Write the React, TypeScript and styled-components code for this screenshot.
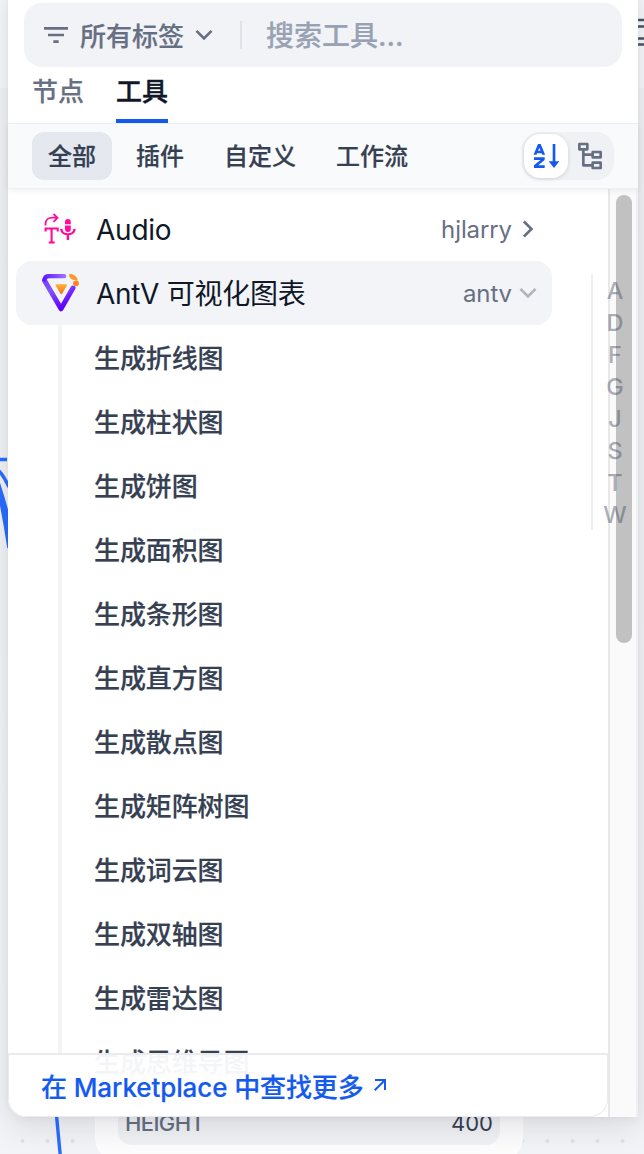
import React from 'react';
import styled, { createGlobalStyle } from 'styled-components';
import {
  RiArrowDownSLine,
  RiArrowRightSLine,
  RiArrowRightUpLine,
  RiFilter3Line,
  RiNodeTree,
  RiSortAlphabetAsc,
} from 'react-icons/ri';

const GlobalStyle = createGlobalStyle`
  * { box-sizing: border-box; }
  body {
    margin: 0;
    background: #f2f4f7;
    font-family: Inter, 'Noto Sans CJK SC', sans-serif;
  }
  svg { flex: none; }
`;

const Page = styled.div`
  position: relative;
  width: 644px;
  height: 1154px;
  overflow: hidden;
  background: linear-gradient(#f5f7f9 88px, #f0f2f5 88px, #f2f4f7 100%);
`;

const Canvas = styled.svg`
  position: absolute;
  inset: 0;
`;

const NodeCard = styled.div`
  position: absolute;
  left: 95px;
  top: 1040px;
  width: 428px;
  height: 122px;
  padding: 40px 22px 0;
  border: 1px solid #fff;
  border-radius: 0 0 24px 24px;
  background: #fdfdfe;
`;

const NodeField = styled.div`
  display: flex;
  justify-content: space-between;
  align-items: center;
  height: 64px;
  padding: 20px 7px 0;
  border-radius: 14px;
  background: #f0f2f5;
  font-size: 22px;
  line-height: 42px;
  font-weight: 500;
  letter-spacing: -0.6px;
  color: #676f83;
`;

const FieldValue = styled.span`
  color: #354052;
  font-size: 22px;
  font-weight: 400;
  letter-spacing: 0;
`;

const Panel = styled.div`
  position: absolute;
  left: 8px;
  top: -20px;
  width: 630px;
  height: 1137px;
  padding-top: 20px;
  display: flex;
  flex-direction: column;
  background: linear-gradient(to right, transparent 628px, #f0f0f2 628px);
  border-radius: 0 0 0 20px;
  box-shadow: 0 12px 32px rgba(16, 24, 40, 0.1), 0 2px 10px rgba(16, 24, 40, 0.05);
`;

const Header = styled.div`
  flex: none;
  height: 124px;
  padding: 3px 16px 0;
  background: #fff;
  border-bottom: 1px solid #eff1f3;
`;

const SearchBar = styled.div`
  display: flex;
  align-items: center;
  height: 64px;
  padding-left: 16px;
  border-radius: 18px;
  background: #f1f3f7;
  color: #676f83;
  font-size: 26px;
  font-weight: 500;
  -webkit-text-stroke: 0.2px currentColor;

  span { position: relative; top: -1px; }
`;

const TagLabel = styled.span`
  margin: 0 4px 0 8px;
`;

const Separator = styled.i`
  width: 2px;
  height: 28px;
  margin: 0 24px 0 20px;
  background: #dfe2e8;
`;

const Placeholder = styled.span`
  font-size: 28px;
  color: #98a2b3;
`;

const Tabs = styled.div`
  display: flex;
  gap: 32px;
  padding-left: 8px;
`;

const Tab = styled.div<{ $active?: boolean }>`
  height: 56px;
  line-height: 50px;
  font-size: 26px;
  font-weight: 500;
  -webkit-text-stroke: ${(p) => (p.$active ? '0.4px' : '0.2px')} currentColor;
  color: ${(p) => (p.$active ? '#101828' : '#676f83')};
  border-bottom: 4px solid ${(p) => (p.$active ? '#155aef' : 'transparent')};
`;

const FilterRow = styled.div`
  flex: none;
  position: relative;
  z-index: 1;
  display: flex;
  align-items: center;
  gap: 8px;
  height: 65px;
  padding: 0 24px;
  background: #f9fafb;
  border-bottom: 1px solid #eef0f2;
  box-shadow: 0 2px 6px rgba(16, 24, 40, 0.06);
`;

const Chip = styled.div<{ $active?: boolean }>`
  height: 48px;
  padding: 0 16px;
  border-radius: 12px;
  line-height: 50px;
  font-size: 24px;
  font-weight: 500;
  -webkit-text-stroke: 0.2px currentColor;
  color: #354052;
  background: ${(p) => (p.$active ? '#e5e8ef' : 'transparent')};
`;

const ViewToggle = styled.div`
  display: flex;
  align-items: center;
  width: 92px;
  height: 48px;
  margin-left: auto;
  padding: 2px;
  border-radius: 18px;
  background: #f0f1f5;
`;

const ViewButton = styled.div<{ $active?: boolean }>`
  display: flex;
  align-items: center;
  justify-content: center;
  width: 44px;
  height: 44px;
  border-radius: 16px;
  color: ${(p) => (p.$active ? '#155aef' : '#676f83')};
  background: ${(p) => (p.$active ? '#fff' : 'transparent')};
  box-shadow: ${(p) => (p.$active ? '0 1px 4px rgba(16, 24, 40, 0.14)' : 'none')};
`;

const Body = styled.div`
  position: relative;
  display: flex;
  flex: 1;
  min-height: 0;
  width: 628px;
  background: #fff;
  border-bottom-left-radius: 18px;
  overflow: hidden;
`;

const List = styled.div`
  width: 600px;
  padding: 8px 0 0 8px;
`;

const ProviderRow = styled.div<{ $open?: boolean }>`
  display: flex;
  align-items: center;
  width: 536px;
  height: 64px;
  padding: 0 8px 0 24px;
  border-radius: 16px;
  background: ${(p) => (p.$open ? '#f3f4f8' : 'transparent')};
  color: ${(p) => (p.$open ? '#b0b4bd' : '#676f83')};
`;

const ProviderName = styled.span`
  flex: 1;
  margin-left: 16px;
  padding-top: 1px;
  font-size: 28px;
  line-height: 40px;
  letter-spacing: -0.25px;
  color: #101828;
`;

const Author = styled.span`
  font-size: 24px;
  letter-spacing: -0.1px;
  color: #676f83;
`;

const Children = styled.div`
  margin-left: 42px;
  padding-left: 32px;
  border-left: 4px solid #f3f4f6;
`;

const ToolRow = styled.div`
  height: 64px;
  line-height: 67px;
  font-size: 26px;
  font-weight: 500;
  -webkit-text-stroke: 0.2px currentColor;
  letter-spacing: -0.1px;
  color: #354052;
`;

const ScrollTrack = styled.div`
  width: 28px;
  padding: 6px 4px 0 6px;
  background: #fafafa;
  border-left: 2px solid #e8e8e8;
`;

const ScrollThumb = styled.div`
  width: 16px;
  height: 448px;
  border-radius: 8px;
  background: #c1c1c1;
`;

const LetterIndex = styled.div`
  position: absolute;
  right: 8px;
  top: 85px;
  width: 37px;
  height: 256px;
  padding: 1px 0 0 10px;
  border-left: 2px solid #eeeff1;
  color: rgba(70, 75, 95, 0.45);
  font-size: 23.5px;
  font-weight: 500;
  line-height: 32px;
`;

const Letter = styled.div`
  width: 24px;
  text-align: center;
`;

const Footer = styled.div`
  position: absolute;
  left: 0;
  bottom: 0;
  display: flex;
  align-items: center;
  gap: 4px;
  width: 600px;
  height: 64px;
  padding: 0 0 1px 32px;
  border: 1px solid #ebebed;
  border-top-width: 2px;
  border-radius: 0 0 18px 18px;
  background: rgba(255, 255, 255, 0.95);
  color: #155aef;
  font-size: 26px;
  font-weight: 500;
  letter-spacing: -0.1px;
  -webkit-text-stroke: 0.2px currentColor;
`;

const AudioIcon = () => (
  <svg width="40" height="40" viewBox="0 0 40 40" fill="none" stroke="#ff0a9b" strokeWidth="1.8">
    <path d="M5.500 16.500v-1.500c0-4.500 3-6.300 7-6.300h5M13.500 4.800l4 4-4 4" />
    <path d="M5.600 22.500v-3H17.700v3M11.600 19.500v14M8.700 33.500h6" strokeWidth="2.100" />
    <path d="M25 15.300v-2.500a2.800 2.800 0 0 1 5.800 0v2.500zM25 16.500h5.800v3.500a2.800 2.800 0 0 1-5.800 0z" fill="#ff0a9b" stroke="none" />
    <path d="M21.200 19.800c.3 3.500 3.400 5.600 6.700 5.600s6.400-2.100 6.700-5.600M27.900 25v6" strokeWidth="2.400" />
  </svg>
);

const AntVIcon = () => (
  <svg width="40" height="40" viewBox="0 0 40 40" fill="none" strokeLinecap="round" strokeLinejoin="round">
    <defs>
      <linearGradient id="violet" x1="0" y1="0" x2="0.5" y2="1">
        <stop offset="0" stopColor="#7040ff" />
        <stop offset="0.35" stopColor="#8555ff" />
        <stop offset="1" stopColor="#6200ff" />
      </linearGradient>
      <linearGradient id="topbar" gradientUnits="userSpaceOnUse" x1="4" y1="4" x2="26" y2="4">
        <stop offset="0" stopColor="#6218ff" />
        <stop offset="1" stopColor="#9b78ff" />
      </linearGradient>
      <linearGradient id="orange" x1="0" y1="0" x2="0" y2="1">
        <stop offset="0" stopColor="#ffad32" />
        <stop offset="1" stopColor="#ff741b" />
      </linearGradient>
    </defs>
    <path d="M4.500 7.500L21 35.800L33 15" stroke="url(#violet)" strokeWidth="5" />
    <path d="M4.500 6.500C5 4 7 3.200 9 3.200H24.300" stroke="url(#topbar)" strokeWidth="4.200" />
    <path d="M16.500 12.200h9.500l-4.700 8z" fill="url(#orange)" stroke="url(#orange)" strokeWidth="1.800" />
    <path d="M29.500 1c3.500 0 7.500 1.500 8.300 6.500l-4-.6c-2.300-.4-4.600-2-4.800-5z" fill="#f79a32" />
    <circle cx="36" cy="10.300" r="2.900" fill="#ff8420" />
  </svg>
);

const tools = [
  '生成折线图', '生成柱状图', '生成饼图', '生成面积图', '生成条形图', '生成直方图', '生成散点图',
  '生成矩阵树图', '生成词云图', '生成双轴图', '生成雷达图', '生成思维导图',
];

const filters = ['全部', '插件', '自定义', '工作流'];

const letters = 'ADFGJSTW'.split('');

const dots = [22.5, 47.5, 72.5, 522.5, 547.5, 572.5, 597.5, 622.5];

export default function App() {
  return (
    <Page>
      <GlobalStyle />
      <Canvas width="644" height="1154">
        {dots.map((x) => (
          <circle key={x} cx={x} cy="1141" r="2" fill="#dfe2ea" />
        ))}
        <g fill="none" stroke="#296dff" strokeWidth="3.4">
          <path d="M0 459.500H7M-3 469Q3 474 9 487M-2 482Q4 500 9 520M-2 488Q4 515 9 548M-2 484Q5 504 9 534" />
          <path d="M56 1110L60.500 1158" />
        </g>
        <path d="M638 20h6M638 26.500h6M638 38.500h6M638 44.500h6" stroke="#495464" strokeWidth="2.500" />
      </Canvas>
      <NodeCard>
        <NodeField>
          <span>HEIGHT</span>
          <FieldValue>400</FieldValue>
        </NodeField>
      </NodeCard>
      <Panel>
        <Header>
          <SearchBar>
            <RiFilter3Line size={32} />
            <TagLabel>所有标签</TagLabel>
            <RiArrowDownSLine size={32} />
            <Separator />
            <Placeholder>搜索工具...</Placeholder>
          </SearchBar>
          <Tabs>
            <Tab>节点</Tab>
            <Tab $active>工具</Tab>
          </Tabs>
        </Header>
        <FilterRow>
          {filters.map((name, i) => (
            <Chip key={name} $active={i === 0}>{name}</Chip>
          ))}
          <ViewToggle>
            <ViewButton $active><RiSortAlphabetAsc size={32} /></ViewButton>
            <ViewButton><RiNodeTree size={32} /></ViewButton>
          </ViewToggle>
        </FilterRow>
        <Body>
          <List>
            <ProviderRow>
              <AudioIcon />
              <ProviderName>Audio</ProviderName>
              <Author>hjlarry</Author>
              <RiArrowRightSLine size={32} />
            </ProviderRow>
            <ProviderRow $open>
              <AntVIcon />
              <ProviderName>AntV 可视化图表</ProviderName>
              <Author>antv</Author>
              <RiArrowDownSLine size={32} />
            </ProviderRow>
            <Children>
              {tools.map((name) => (
                <ToolRow key={name}>{name}</ToolRow>
              ))}
            </Children>
          </List>
          <ScrollTrack>
            <ScrollThumb />
          </ScrollTrack>
          <LetterIndex>
            {letters.map((l) => (
              <Letter key={l}>{l}</Letter>
            ))}
          </LetterIndex>
          <Footer>
            <span>在 Marketplace 中查找更多</span>
            <RiArrowRightUpLine size={24} />
          </Footer>
        </Body>
      </Panel>
    </Page>
  );
}
